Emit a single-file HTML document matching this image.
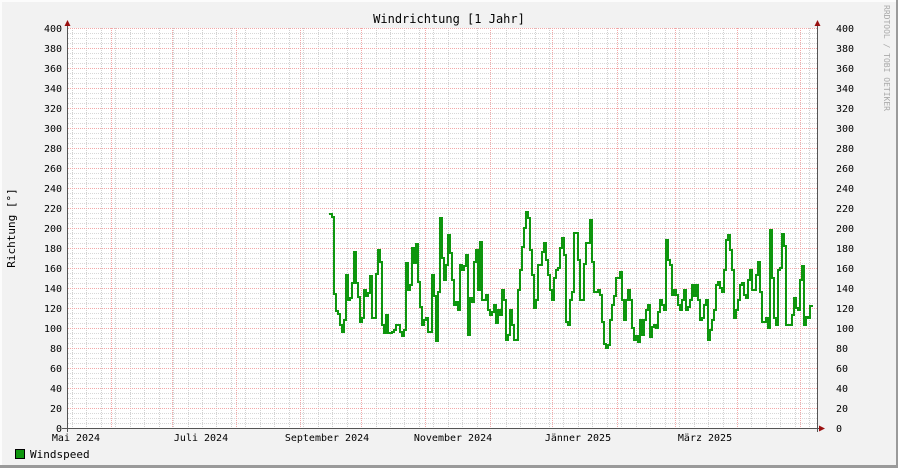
<!DOCTYPE html>
<html><head><meta charset="utf-8"><style>
html,body{margin:0;padding:0;background:#f2f2f2}
svg{display:block}
text{font-family:"DejaVu Sans Mono","Liberation Mono",monospace}
</style></head><body>
<svg width="898" height="468" viewBox="0 0 898 468" xmlns="http://www.w3.org/2000/svg" shape-rendering="crispEdges">
<defs>
<pattern id="hmin" x="0" y="28" width="2" height="5" patternUnits="userSpaceOnUse"><rect x="0" y="0" width="1" height="1" fill="#d8d8d8"/></pattern>
<pattern id="hmaj" x="0" y="28" width="2" height="20" patternUnits="userSpaceOnUse"><rect x="0" y="0" width="1" height="1" fill="#f2a8a8"/></pattern>
</defs>
<rect x="0" y="0" width="898" height="468" fill="#f2f2f2"/>
<rect x="0" y="0" width="898" height="2" fill="#fcfcfc"/>
<rect x="0" y="0" width="2" height="468" fill="#fcfcfc"/>
<rect x="0" y="465" width="898" height="3" fill="#9a9a9a"/>
<rect x="896" y="0" width="2" height="468" fill="#9a9a9a"/>
<rect x="67" y="28" width="750" height="400" fill="#ffffff"/>
<rect x="67" y="28" width="750" height="400" fill="url(#hmin)"/>
<path stroke="#d0d0d0" stroke-width="1" stroke-dasharray="1,1" fill="none" d="M72.5 28V428M86.5 28V428M101.5 28V428M115.5 28V428M130.5 28V428M144.5 28V428M159.5 28V428M173.5 28V428M188.5 28V428M202.5 28V428M216.5 28V428M231.5 28V428M245.5 28V428M260.5 28V428M274.5 28V428M289.5 28V428M303.5 28V428M318.5 28V428M332.5 28V428M347.5 28V428M376.5 28V428M390.5 28V428M404.5 28V428M419.5 28V428M433.5 28V428M448.5 28V428M462.5 28V428M477.5 28V428M506.5 28V428M520.5 28V428M535.5 28V428M549.5 28V428M563.5 28V428M578.5 28V428M592.5 28V428M607.5 28V428M621.5 28V428M636.5 28V428M650.5 28V428M665.5 28V428M679.5 28V428M694.5 28V428M708.5 28V428M723.5 28V428M751.5 28V428M766.5 28V428M780.5 28V428M795.5 28V428M809.5 28V428"/>
<rect x="67" y="28" width="750" height="400" fill="url(#hmaj)"/>
<g stroke="#f2a8a8" stroke-width="1" stroke-dasharray="1,1">
<line x1="111.5" y1="28" x2="111.5" y2="428"/><line x1="172.5" y1="28" x2="172.5" y2="428"/>
<line x1="236.5" y1="28" x2="236.5" y2="428"/><line x1="300.5" y1="28" x2="300.5" y2="428"/>
<line x1="361.5" y1="28" x2="361.5" y2="428"/><line x1="425.5" y1="28" x2="425.5" y2="428"/>
<line x1="490.5" y1="28" x2="490.5" y2="428"/><line x1="552.5" y1="28" x2="552.5" y2="428"/>
<line x1="617.5" y1="28" x2="617.5" y2="428"/><line x1="675.5" y1="28" x2="675.5" y2="428"/>
<line x1="737.5" y1="28" x2="737.5" y2="428"/><line x1="800.5" y1="28" x2="800.5" y2="428"/>
</g>
<path fill="none" stroke="#0e960e" stroke-width="2" shape-rendering="auto" d="M329 214 H332 V217 H334 V294 H336 V311 H338 V314 H340 V325 H342 V332 H344 V320 H346 V275 H348 V300 H350 V298 H352 V283 H354 V252 H356 V283 H358 V297 H360 V322 H362 V318 H364 V290 H366 V296 H368 V293 H370 V276 H372 V318 H374 V318 H376 V274 H378 V250 H380 V262 H382 V325 H384 V333 H386 V315 H388 V333 H392 V332 H394 V330 H396 V325 H400 V332 H402 V336 H404 V330 H406 V263 H408 V290 H410 V285 H412 V248 H414 V263 H416 V244 H418 V282 H420 V307 H422 V325 H424 V320 H426 V318 H428 V332 H432 V275 H434 V296 H436 V341 H438 V292 H440 V218 H442 V258 H444 V280 H446 V265 H448 V235 H450 V253 H452 V280 H454 V305 H456 V302 H458 V310 H460 V265 H462 V270 H464 V266 H466 V255 H468 V335 H470 V298 H472 V302 H474 V262 H476 V250 H478 V290 H480 V242 H482 V300 H486 V295 H488 V310 H490 V315 H492 V312 H494 V305 H496 V323 H498 V310 H500 V315 H502 V290 H504 V300 H506 V340 H508 V335 H510 V310 H512 V325 H514 V340 H518 V290 H520 V270 H522 V247 H524 V228 H526 V212 H528 V218 H530 V250 H532 V275 H534 V308 H536 V300 H538 V265 H542 V252 H544 V243 H546 V260 H548 V275 H550 V290 H552 V300 H554 V278 H556 V270 H558 V268 H560 V248 H562 V238 H564 V255 H566 V322 H568 V325 H570 V300 H572 V292 H574 V233 H578 V260 H580 V300 H584 V264 H586 V243 H590 V220 H592 V262 H594 V292 H598 V290 H600 V295 H602 V322 H604 V344 H606 V348 H608 V345 H610 V320 H612 V305 H614 V296 H616 V278 H620 V272 H622 V300 H624 V320 H626 V300 H628 V290 H630 V300 H632 V328 H634 V340 H636 V336 H638 V342 H640 V320 H642 V335 H644 V320 H646 V310 H648 V305 H650 V337 H652 V327 H654 V325 H656 V328 H658 V312 H660 V300 H662 V305 H664 V310 H666 V240 H668 V260 H670 V265 H672 V295 H674 V290 H676 V295 H678 V305 H680 V310 H682 V300 H684 V290 H686 V310 H688 V307 H690 V300 H692 V285 H694 V296 H696 V285 H698 V300 H700 V320 H702 V318 H704 V305 H706 V300 H708 V340 H710 V330 H712 V320 H714 V310 H716 V285 H718 V282 H720 V288 H722 V292 H724 V270 H726 V240 H728 V235 H730 V250 H732 V270 H734 V318 H736 V310 H738 V300 H740 V285 H742 V283 H744 V295 H746 V298 H748 V280 H750 V270 H752 V290 H756 V275 H758 V262 H760 V292 H762 V322 H766 V318 H768 V328 H770 V230 H772 V278 H774 V318 H776 V325 H778 V270 H780 V268 H782 V234 H784 V246 H786 V325 H790 V325 H792 V315 H794 V298 H796 V308 H798 V310 H800 V280 H802 V266 H804 V325 H806 V317 H808 V318 H810 V306 H813"/>
<g stroke="#555" stroke-width="1">
<line x1="67.5" y1="24" x2="67.5" y2="432"/>
<line x1="62" y1="428.5" x2="820" y2="428.5"/>
<line x1="817.5" y1="24" x2="817.5" y2="432"/>
</g>
<g fill="#9a1010" shape-rendering="auto">
<polygon points="64.5,26 70.5,26 67.5,20"/>
<polygon points="814.5,26 820.5,26 817.5,20"/>
<polygon points="819,425.5 819,431.5 825,428.5"/>
</g>
<g font-size="10" fill="#000" text-anchor="end">
<text x="62" y="32">400</text><text x="62" y="52">380</text><text x="62" y="72">360</text><text x="62" y="92">340</text><text x="62" y="112">320</text><text x="62" y="132">300</text><text x="62" y="152">280</text><text x="62" y="172">260</text><text x="62" y="192">240</text><text x="62" y="212">220</text><text x="62" y="232">200</text><text x="62" y="252">180</text><text x="62" y="272">160</text><text x="62" y="292">140</text><text x="62" y="312">120</text><text x="62" y="332">100</text><text x="62" y="352">80</text><text x="62" y="372">60</text><text x="62" y="392">40</text><text x="62" y="412">20</text><text x="62" y="432">0</text>
</g>
<g font-size="10" fill="#000" text-anchor="start">
<text x="836" y="32">400</text><text x="836" y="52">380</text><text x="836" y="72">360</text><text x="836" y="92">340</text><text x="836" y="112">320</text><text x="836" y="132">300</text><text x="836" y="152">280</text><text x="836" y="172">260</text><text x="836" y="192">240</text><text x="836" y="212">220</text><text x="836" y="232">200</text><text x="836" y="252">180</text><text x="836" y="272">160</text><text x="836" y="292">140</text><text x="836" y="312">120</text><text x="836" y="332">100</text><text x="836" y="352">80</text><text x="836" y="372">60</text><text x="836" y="392">40</text><text x="836" y="412">20</text><text x="836" y="432">0</text>
</g>
<g font-size="10" fill="#000" text-anchor="middle">
<text x="76" y="441">Mai 2024</text><text x="201" y="441">Juli 2024</text><text x="327" y="441">September 2024</text><text x="453" y="441">November 2024</text><text x="578" y="441">Jänner 2025</text><text x="705" y="441">März 2025</text>
</g>
<text x="449" y="23" font-size="12" text-anchor="middle" fill="#000">Windrichtung [1 Jahr]</text>
<text transform="translate(15,228) rotate(-90)" font-size="11" text-anchor="middle" fill="#000">Richtung [°]</text>
<text transform="translate(884,5) rotate(90)" font-size="8" fill="#aaa">RRDTOOL / TOBI OETIKER</text>
<rect x="15.5" y="449.5" width="9" height="9" fill="#0e960e" stroke="#000"/>
<text x="30" y="458" font-size="11" fill="#000">Windspeed</text>
</svg>
</body></html>
